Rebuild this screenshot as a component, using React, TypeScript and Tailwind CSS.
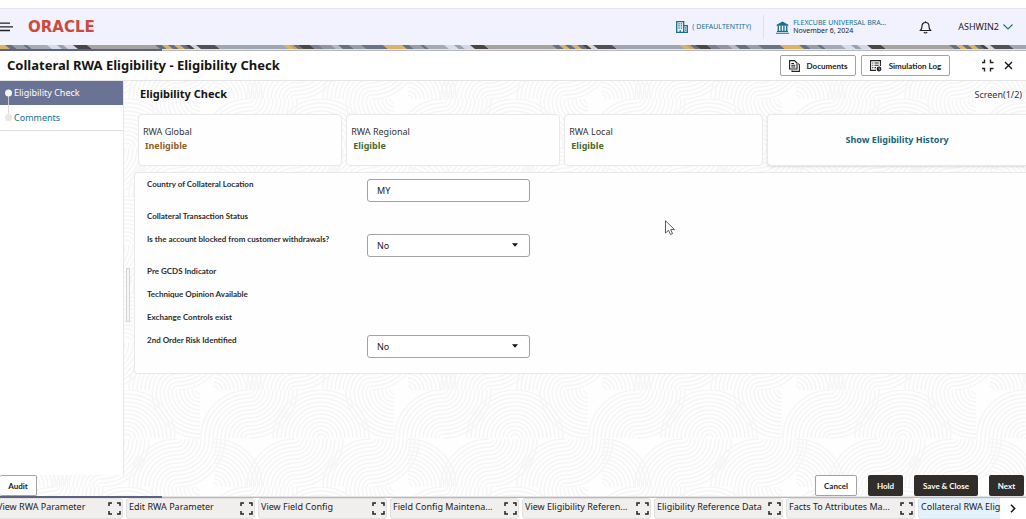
import { useId, useState } from "react";
import type { ReactNode } from "react";

const CELL = 48;
const RADII = [4, 8, 12, 16, 20, 24, 28, 32, 36, 40, 44, 48];

type Corner = "tl" | "tr" | "bl" | "br";

/* Quarter rings fanning out of a centre point towards one corner. */
function Fan({ cx, cy, to }: { cx: number; cy: number; to: Corner }) {
  const sx = to === "tl" || to === "bl" ? -1 : 1;
  const sy = to === "tl" || to === "tr" ? -1 : 1;
  const sweep = sx * sy === 1 ? 1 : 0;
  return (
    <>
      {RADII.map((r) => (
        <path key={r} d={`M${cx + sx * r} ${cy} A${r} ${r} 0 0 ${sweep} ${cx} ${cy + sy * r}`} />
      ))}
    </>
  );
}

function Swirls() {
  const id = useId();
  return (
    <svg className="absolute inset-0 h-full w-full" aria-hidden="true">
      <defs>
        <pattern id={id} x="124" y="18" width="194" height="97" patternUnits="userSpaceOnUse">
          <g fill="none" stroke="#f6f5f6" strokeWidth="1.5">
            {[-194, 0, 194].map((dx) => (
              <g key={dx} transform={`translate(${dx} 0)`}>
                <Fan cx={3} cy={CELL} to="tl" />
                <Fan cx={3} cy={CELL} to="tr" />
                <Fan cx={76} cy={0} to="bl" />
                <Fan cx={125} cy={CELL} to="tl" />
                <Fan cx={125} cy={0} to="br" />
                <Fan cx={53} cy={97} to="tl" />
                <Fan cx={53} cy={49} to="br" />
                <Fan cx={90} cy={97} to="tr" />
                <Fan cx={171} cy={97} to="tl" />
                <Fan cx={171} cy={49} to="br" />
              </g>
            ))}
          </g>
        </pattern>
      </defs>
      <rect width="100%" height="100%" fill={`url(#${id})`} />
    </svg>
  );
}

const BANDS: [number, number, string][] = [
  [0, 8, "#d9b26d"], [8, 15, "#667083"], [15, 26, "#969dab"], [26, 30, "#667083"], [30, 50, "#a4aab6"],
  [50, 60, "#d5deec"], [60, 66, "#9aa1ae"], [66, 76, "#cfd9e8"], [76, 90, "#4a4644"], [90, 158, "#a8a39e"],
  [158, 165, "#667083"], [165, 171, "#d9b26d"], [171, 177, "#667083"], [177, 183, "#d9b26d"], [183, 188, "#667083"],
  [188, 193, "#4a4644"], [193, 199, "#d5d7dd"], [199, 218, "#505157"], [218, 286, "#9fa7b6"],
  [286, 292, "#d9b26d"], [292, 296, "#c5a063"], [296, 301, "#667083"], [301, 313, "#4a4644"], [313, 322, "#77808f"],
  [322, 334, "#8f96a2"], [334, 341, "#b4b9c3"], [341, 352, "#667083"], [352, 364, "#969dab"], [364, 386, "#6b7486"],
  [386, 397, "#d9b26d"],
];

function Ribbon() {
  const id = useId();
  return (
    <svg className="block h-1 w-full" aria-hidden="true">
      <defs>
        <pattern id={id} width="397" height="4" patternUnits="userSpaceOnUse">
          <rect width="397" height="4" fill="#d9b26d" />
          {BANDS.map(([a, b, c]) => (
            <path key={a} d={`M${a - 3} 0H${b - 3}L${b + 2} 4H${a + 2}Z`} fill={c} />
          ))}
        </pattern>
      </defs>
      <rect width="100%" height="4" fill={`url(#${id})`} />
    </svg>
  );
}

function SplitLine() {
  return (
    <div className="flex h-0.5 w-full">
      <div className="w-[162px] bg-[#5c6280]" />
      <div className="flex-1 border-b border-[#b9b8bb] bg-[#e4e3e6]" />
    </div>
  );
}

function ExpandIcon() {
  return (
    <svg width="13" height="13" viewBox="0 0 13 13" fill="none" stroke="#222" strokeWidth="1.5" aria-hidden="true">
      <path d="M1 4V1H4M9 1H12V4M12 9V12H9M4 12H1V9" />
    </svg>
  );
}

const LABEL = "font-['Lato',sans-serif] text-[8px] leading-[10px] font-bold whitespace-nowrap text-[#2c2c2c]";

function Field({ label, children }: { label: string; children?: (id: string) => ReactNode }) {
  const id = useId();
  return (
    <div className={`grid grid-cols-[220px_163px] items-start ${children ? "h-8" : "h-[23px]"}`}>
      {children ? (
        <label htmlFor={id} className={LABEL}>{label}</label>
      ) : (
        <span className={LABEL}>{label}</span>
      )}
      {children?.(id)}
    </div>
  );
}

const CONTROL = "block h-[23px] w-full rounded-[3px] border border-[#a3a1a2] bg-white pl-[9px] text-[9px] text-[#222]";

function YesNo({ id }: { id: string }) {
  return (
    <div className="relative">
      <select id={id} defaultValue="No" className={`${CONTROL} appearance-none`}>
        <option>No</option>
        <option>Yes</option>
      </select>
      <svg className="pointer-events-none absolute top-[9px] right-3" width="6" height="4" viewBox="0 0 6 4" aria-hidden="true">
        <path d="M0 .3H6L3 3.8Z" fill="#111" />
      </svg>
    </div>
  );
}

const CARD = "h-[52px] rounded-[4px] border border-[#e9e7e8] bg-[#fefefe]";

function Status({ name, value, tone, width }: { name: string; value: string; tone: string; width: string }) {
  return (
    <div className={`${CARD} ${width} flex flex-col justify-center pb-1 pl-1`}>
      <span className="text-[9px] leading-[14px] text-[#333]">{name}</span>
      <span className={`pl-0.5 text-[9px] leading-[13px] font-bold ${tone}`}>{value}</span>
    </div>
  );
}

const TABS = [
  "View RWA Parameter",
  "Edit RWA Parameter",
  "View Field Config",
  "Field Config Maintena...",
  "View Eligibility Referen...",
  "Eligibility Reference Data",
  "Facts To Attributes Ma...",
];

const SMALL = "font-['Lato',sans-serif] text-[8px] font-bold";
const OUTLINE = `${SMALL} flex items-center justify-center rounded-[2px] border border-[#a3a1a2] bg-white text-[#222]`;
const DARK = `${SMALL} h-[21px] rounded-[2px] bg-[#312d2a] text-white`;

export default function App() {
  const [country, setCountry] = useState("MY");
  return (
    <div className="flex min-h-screen flex-col overflow-hidden bg-white pt-2 font-['Noto_Sans',sans-serif] text-[#222]">
      <header className="flex h-[37px] items-center border-t border-[#e6e6ea] bg-[#f2f2fe]">
        <button aria-label="Menu" className="w-7">
          <svg width="14" height="10" viewBox="0 0 14 10" stroke="#222" strokeWidth="1.3" aria-hidden="true">
            <path d="M0 1.2H10M0 4.8H13M0 8.5H10" />
          </svg>
        </button>
        <span className="font-['DejaVu_Sans',sans-serif] text-[15px] leading-4 font-bold text-[#cb4a3c]">ORACLE</span>
        <div className="ml-auto flex items-center">
          <button className="flex items-center gap-1 text-[7px] text-[#17708a]">
            <svg width="12" height="12" viewBox="0 0 12 12" fill="none" stroke="#17708a" aria-hidden="true">
              <path d="M.7 11.500V.7H7.700V11.500M7.700 4.700H11.300V11.500M0 11.300H12" strokeWidth="1.300" />
              <path d="M3 2.200V8M5.400 2.200V8" strokeWidth="1.300" strokeDasharray="1.300 .8" />
              <path d="M4.200 9V11.500M9.500 6.300V7.500M9.500 8.600V9.800" strokeWidth="1.200" />
            </svg>
            ( DEFAULTENTITY)
          </button>
          <span className="mx-3 h-6 border-l border-[#e2e1ea]" />
          <button className="flex w-[115px] items-center gap-1 text-left">
            <svg width="13" height="13" viewBox="0 0 13 13" fill="none" stroke="#17708a" aria-hidden="true">
              <path d="M.8 4.2L6.5 1L12.2 4.2Z" fill="#17708a" />
              <path d="M2.3 5V10M5.1 5V10M7.9 5V10M10.7 5V10" strokeWidth="1.3" />
              <path d="M1 10.4H12M0 12.3H13" strokeWidth="1.1" />
            </svg>
            <span className="flex flex-col text-[7px] leading-[8px] whitespace-nowrap">
              <span className="text-[#17708a]">FLEXCUBE UNIVERSAL BRA…</span>
              <span>November 6, 2024</span>
            </span>
          </button>
          <button aria-label="Notifications" className="ml-7">
            <svg width="13" height="13" viewBox="0 0 13 13" fill="none" stroke="#222" strokeWidth="1.2" aria-hidden="true">
              <path d="M1.5 9.5C2.6 8.4 3 7.5 3 5.2C3 2.9 4.4 1.5 6.5 1.5S10 2.9 10 5.2C10 7.5 10.4 8.4 11.5 9.5Z" />
              <path d="M5 11C5.3 12.3 7.7 12.3 8 11M6.5 .3V1.5" />
            </svg>
          </button>
          <button className="mr-[13px] ml-[26px] flex items-center gap-1 text-[9px]">
            ASHWIN2
            <svg width="10" height="6" viewBox="0 0 10 6" fill="none" stroke="#17708a" strokeWidth="1.1" aria-hidden="true">
              <path d="M.5 .5L5 5L9.5 .5" />
            </svg>
          </button>
        </div>
      </header>
      <Ribbon />
      <SplitLine />

      <div className="flex h-[30px] items-center border-b border-[#e6e5e6] bg-white pl-[7px]">
        <h1 className="text-[13px] font-bold text-[#161513]">Collateral RWA Eligibility - Eligibility Check</h1>
        <button className={`${OUTLINE} ml-auto h-[21px] w-[76px] gap-[7px]`}>
          <svg width="11" height="12" viewBox="0 0 11 12" fill="none" stroke="#222" strokeWidth="1.1" aria-hidden="true">
            <path d="M.6 .6H5.5L8 3V9H.6ZM9.3 3.5L10.4 5V11.4H3V10.3" />
            <path d="M2.3 3.5H5M2.3 5.3H6.3M2.3 7H6.3" />
          </svg>
          Documents
        </button>
        <button className={`${OUTLINE} mr-[31px] ml-[5px] h-[21px] w-[89px] gap-[7px]`}>
          <svg width="12" height="12" viewBox="0 0 12 12" fill="none" stroke="#222" strokeWidth="1.1" aria-hidden="true">
            <path d="M6 10.4H.6V.6H10.4V6" />
            <path d="M2.2 3H3.3M4.5 3H8.7M2.2 5.3H3.3M4.5 5.3H8.7M2.2 7.6H3.3M4.5 7.6H6" />
            <circle cx="9" cy="9" r="2.4" fill="#222" stroke="none" />
            <path d="M9 7.6V9.2H10.2" stroke="#fff" strokeWidth=".6" />
          </svg>
          Simulation Log
        </button>
        <button aria-label="Collapse">
          <svg width="13" height="13" viewBox="0 0 13 13" fill="none" stroke="#222" strokeWidth="1.4" aria-hidden="true">
            <path d="M1 3.5H3.5V.5M9.5 .5V3.5H12.5M12.5 9.5H9.5V12.5M3.5 12.5V9.5H1" />
          </svg>
        </button>
        <button aria-label="Close" className="mr-[13px] ml-[10px]">
          <svg width="9" height="9" viewBox="0 0 9 9" stroke="#161513" strokeWidth="1.4" aria-hidden="true">
            <path d="M1 1L8 8M8 1L1 8" />
          </svg>
        </button>
      </div>

      <div className="relative flex flex-1 flex-col bg-[#fefefe]">
        <Swirls />
        <div className="relative flex flex-1">
          <nav className="w-[124px] shrink-0 border-r border-[#e9e7e8] bg-white text-[9px]">
            <a href="#check" className="flex h-6 items-center gap-0.5 bg-[#6b7394] pl-[5px] text-white">
              <svg width="7" height="24" viewBox="0 0 7 24" aria-hidden="true">
                <path d="M3.5 12V24" stroke="#c9c8cc" />
                <circle cx="3.5" cy="12" r="3.5" fill="#f4f3f3" />
              </svg>
              Eligibility Check
            </a>
            <a href="#comments" className="flex h-[26px] items-center gap-0.5 border-b border-[#dedcdd] pl-[5px] text-[#17708a]">
              <svg width="7" height="25" viewBox="0 0 7 25" aria-hidden="true">
                <path d="M3.5 0V12" stroke="#dddbdc" />
                <circle cx="3.5" cy="12.5" r="3.5" fill="#e9e7e6" />
              </svg>
              Comments
            </a>
          </nav>
          <div className="flex w-[10px] shrink-0 items-center pt-[34px] pl-0.5">
            <div className="h-[54px] w-1 border border-[#d4d2d3] bg-[#f8f7f7]" />
          </div>
          <main className="min-w-0 flex-1">
            <div className="flex h-[33px] items-center justify-between pr-1 pb-[6px] pl-[6px]">
              <h2 className="text-[11px] font-bold text-[#161513]">Eligibility Check</h2>
              <span className="text-[9px] text-[#333]">Screen(1/2)</span>
            </div>
            <div className="flex gap-1 pl-1">
              <Status name="RWA Global" value="Ineligible" tone="text-[#94601f]" width="w-[23%]" />
              <Status name="RWA Regional" value="Eligible" tone="text-[#4a6a2a]" width="w-[24.1%]" />
              <Status name="RWA Local" value="Eligible" tone="text-[#4a6a2a]" width="w-[22.4%]" />
              <button className={`${CARD} flex-1 rounded-r-none border-r-0 text-[9px] font-bold text-[#12647f] shadow-sm`}>Show Eligibility History</button>
            </div>
            <form className="mt-[6px] h-[202px] rounded-l-[4px] border border-r-0 border-[#e9e7e8] bg-[#fefefe] pt-[6px] pl-3">
              <Field label="Country of Collateral Location">
                {(id) => <input id={id} className={CONTROL} value={country} onChange={(e) => setCountry(e.target.value)} />}
              </Field>
              <Field label="Collateral Transaction Status" />
              <Field label="Is the account blocked from customer withdrawals?">{(id) => <YesNo id={id} />}</Field>
              <Field label="Pre GCDS Indicator" />
              <Field label="Technique Opinion Available" />
              <Field label="Exchange Controls exist" />
              <Field label="2nd Order Risk Identified">{(id) => <YesNo id={id} />}</Field>
            </form>
          </main>
        </div>
        <footer className="relative flex items-center pr-0.5">
          <button className={`${OUTLINE} mr-auto h-[21px] w-[37px] border-l-0`}>Audit</button>
          <button className={`${OUTLINE} h-[21px] w-[42px]`}>Cancel</button>
          <button className={`${DARK} ml-[11px] w-[35px]`}>Hold</button>
          <button className={`${DARK} ml-[11px] w-16`}>Save &amp; Close</button>
          <button className={`${DARK} ml-[11px] w-[35px]`}>Next</button>
        </footer>
        <svg className="absolute top-[139px] left-[665px]" width="11" height="16" viewBox="0 0 11 16" fill="#fff" stroke="#333" strokeWidth=".8" aria-hidden="true">
          <path d="M.5 .8V13L3.5 10.3L5.5 14.5L7.5 13.6L5.7 9.6H9.5Z" />
        </svg>
      </div>

      <SplitLine />
      <div className="flex h-[21px] bg-white text-[9px]">
        <div className="-ml-1.5 flex min-w-0 flex-1 gap-[3px] overflow-hidden">
          {TABS.map((tab) => (
            <div key={tab} className="flex w-[129px] shrink-0 items-center justify-between rounded-[3px] border border-[#e3e1e0] bg-[#f0efee] pr-px pl-0.5">
              <button className="pb-1 whitespace-nowrap">{tab}</button>
              <button aria-label={`Expand ${tab}`}>
                <ExpandIcon />
              </button>
            </div>
          ))}
          <div className="flex w-[129px] shrink-0 items-center rounded-[3px] border border-[#d8e6f0] bg-[#e4f1fa] pl-0.5">
            <button className="pb-1 whitespace-nowrap">Collateral RWA Eligibility</button>
          </div>
        </div>
        <button aria-label="Next tabs" className="flex w-[26px] items-center pl-[10px]">
          <svg width="6" height="9" viewBox="0 0 6 9" fill="none" stroke="#161513" strokeWidth="1.5" aria-hidden="true">
            <path d="M1 .8L4.7 4.5L1 8.2" />
          </svg>
        </button>
      </div>
    </div>
  );
}
